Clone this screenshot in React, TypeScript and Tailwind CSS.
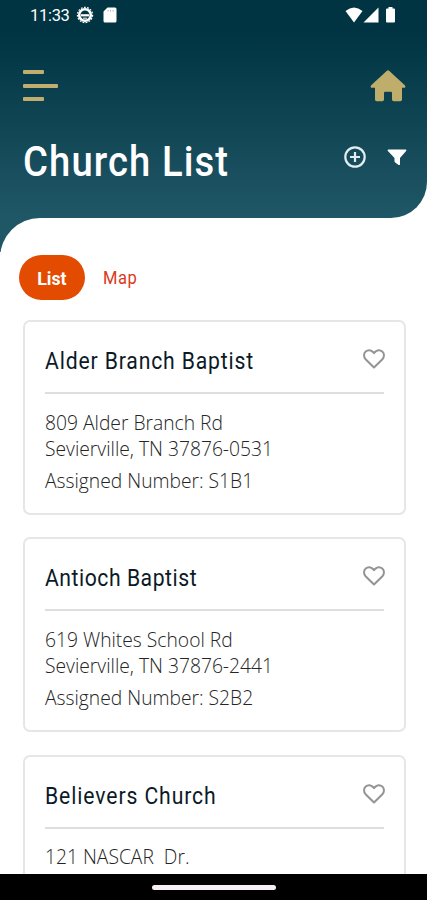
import { FC } from "react";

type Church = {
  name: string;
  tracking: string;
  street: string;
  city?: string;
  number?: string;
};

const churches: Church[] = [
  { name: "Alder Branch Baptist", tracking: "tracking-[0.95px]", street: "809 Alder Branch Rd", city: "Sevierville, TN 37876-0531", number: "S1B1" },
  { name: "Antioch Baptist", tracking: "tracking-[0.6px]", street: "619 Whites School Rd", city: "Sevierville, TN 37876-2441", number: "S2B2" },
  { name: "Believers Church", tracking: "tracking-[1px]", street: "121 NASCAR  Dr." },
];

const StatusBar: FC = () => (
  <div className="flex h-[30px] items-center pl-[30px] pr-[30px] text-white">
    <span className="w-[46px] pt-0.5 text-[16.5px] leading-[30px] tracking-[-0.3px]">11:33</span>
    <svg className="block" width="18" height="18" viewBox="0 0 18 18" fill="none" stroke="currentColor">
      <circle cx="9" cy="9" r="5.8" strokeWidth="2.6" />
      <circle cx="9" cy="9" r="7.6" strokeWidth="1.2" strokeDasharray="1.8 1.34" />
      <path d="M5 8.2h8v2.2H5z" fill="currentColor" stroke="none" />
      <path d="M7 12.2h4" />
    </svg>
    <svg className="ml-[9px] block" width="14" height="16" viewBox="0 0 14 16">
      <path d="M4.5 0.5H12a1.5 1.5 0 0 1 1.5 1.5v12a1.5 1.5 0 0 1-1.5 1.5H2A1.5 1.5 0 0 1 .5 14V4.5z" fill="currentColor" />
      <path d="M5 3v1.5M7.5 3v1.5M10 3v1.5" stroke="#9fb2b8" strokeWidth="0.9" />
    </svg>
    <svg className="ml-auto block" width="52" height="18" viewBox="0 0 52 18" fill="currentColor">
      <path d="M.5 5Q9 -2 17.5 5L9 16.5z" />
      <path d="M33.5 1.5v15h-15z" />
      <path d="M43.5 1h4v1.5H49a1 1 0 0 1 1 1V15.5a1 1 0 0 1-1 1h-7a1 1 0 0 1-1-1V3.500a1 1 0 0 1 1-1h1.500z" />
    </svg>
  </div>
);

const Header: FC = () => (
  <header className="h-[218px] rounded-br-[36px] bg-linear-to-b from-[#003443] from-14% to-[#205766]">
    <StatusBar />
    <div className="flex items-start justify-between pl-[23px] pr-[21px] pt-10">
      <div className="flex flex-col gap-[9.5px]">
        <span className="h-1 w-[21px] rounded-[1px] bg-[#bfae6e]" />
        <span className="h-1 w-[35px] rounded-[1px] bg-[#bfae6e]" />
        <span className="h-1 w-[21px] rounded-[1px] bg-[#bfae6e]" />
      </div>
      <svg className="block" width="36" height="32" viewBox="0 0 36 32" fill="#bfae6b">
        <path d="M16.9.7a1.7 1.7 0 0 1 2.2 0L34.8 15.2c1.1 1.2.6 2.6-.8 2.6h-2V29.5a1.7 1.7 0 0 1-1.7 1.7h-6.6a1.7 1.7 0 0 1-1.7-1.7V23a1.2 1.2 0 0 0-1.2-1.2h-5.6A1.2 1.2 0 0 0 14 23v6.5a1.7 1.7 0 0 1-1.7 1.7H6.700A1.700 1.700 0 0 1 5 29.500V17.800H2c-1.400 0-1.900-1.400-.8-2.600z" />
      </svg>
    </div>
    <div className="flex items-center pl-[23px] pr-5 pt-[29px] text-white">
      <h1 className="origin-left scale-x-[.89] whitespace-nowrap text-[43px] font-medium leading-[61px] tracking-[1.2px]">Church List</h1>
      <svg className="mb-[10px] ml-auto block" width="22" height="22" viewBox="0 0 22 22" fill="none" stroke="#e3edef" strokeWidth="2.2">
        <circle cx="11" cy="11" r="9.7" />
        <path d="M11 6v10M6 11h10" />
      </svg>
      <svg className="mb-[9px] ml-[21px] block" width="20" height="17" viewBox="0 0 20 17" fill="currentColor">
        <path d="M1.5.5h17c.9 0 1.2.9.6 1.6L13 9v6.2c0 .9-.8 1.1-1.4.7L8.2 13.5c-.5-.4-.7-.7-.7-1.3V9L.9 2.1C.3 1.4.6.5 1.5.5z" />
      </svg>
    </div>
  </header>
);

const ChurchCard: FC<{ church: Church }> = ({ church }) => (
  <li className="h-[195px] shrink-0 rounded-[7px] border-2 border-[#e6e6e6] px-[20px]">
    <div className="flex h-[72px] items-center justify-between border-b-2 border-[#dedede] pt-2">
      <h2 className={`origin-left scale-x-90 whitespace-nowrap text-[23.5px] leading-8 text-[#0c1a27] ${church.tracking}`}>{church.name}</h2>
      <svg className="mb-1 -mr-px block" width="22" height="20" viewBox="0 0 22 20" fill="none" stroke="#949494" strokeWidth="2" strokeLinejoin="round">
        <path d="M11 18.5L2.6 10.2C.4 7.8.6 4.3 2.7 2.5c2.3-2 5.4-1.7 7.3.5l1 1.2 1-1.2c1.9-2.2 5-2.5 7.3-.5 2.1 1.8 2.3 5.3.1 7.7z" />
      </svg>
    </div>
    <div className="whitespace-pre pt-[15.5px] font-['Open_Sans'] text-[19.25px] font-light leading-[26px] text-[#252525]">
      <p>{church.street}</p>
      {church.city && <p>{church.city}</p>}
      {church.number && <p className="mt-[6.5px]">Assigned Number: {church.number}</p>}
    </div>
  </li>
);

export default function App() {
  return (
    <main className="flex h-[900px] w-full flex-col overflow-hidden bg-white font-['Roboto',sans-serif]">
      <Header />
      <section className="relative flex min-h-0 flex-1 flex-col overflow-hidden">
        <span className="absolute left-0 top-0 h-[34px] w-10 bg-[#205766]" />
        <div className="relative rounded-tl-[40px] bg-white pl-[23px] pr-[21px] pt-[37px]">
          <nav className="-ml-1 flex h-[45px] items-center gap-[18px] text-[18px] leading-[47px]">
            <button className="h-[45px] w-[66px] rounded-[22.5px] bg-[#e34b00] font-bold text-white">
              <span className="inline-block scale-x-[.98]">List</span>
            </button>
            <button className="origin-left scale-x-[.92] tracking-[0.5px] text-[#d93a1b]">Map</button>
          </nav>
          <ul className="mt-5 flex flex-col gap-[22.4px]">
            {churches.map((c) => (
              <ChurchCard key={c.name} church={c} />
            ))}
          </ul>
        </div>
      </section>
      <footer className="flex h-[26px] shrink-0 items-center justify-center bg-black">
        <span className="h-[5px] w-[124px] rounded-full bg-[#f5eff5]" />
      </footer>
    </main>
  );
}
